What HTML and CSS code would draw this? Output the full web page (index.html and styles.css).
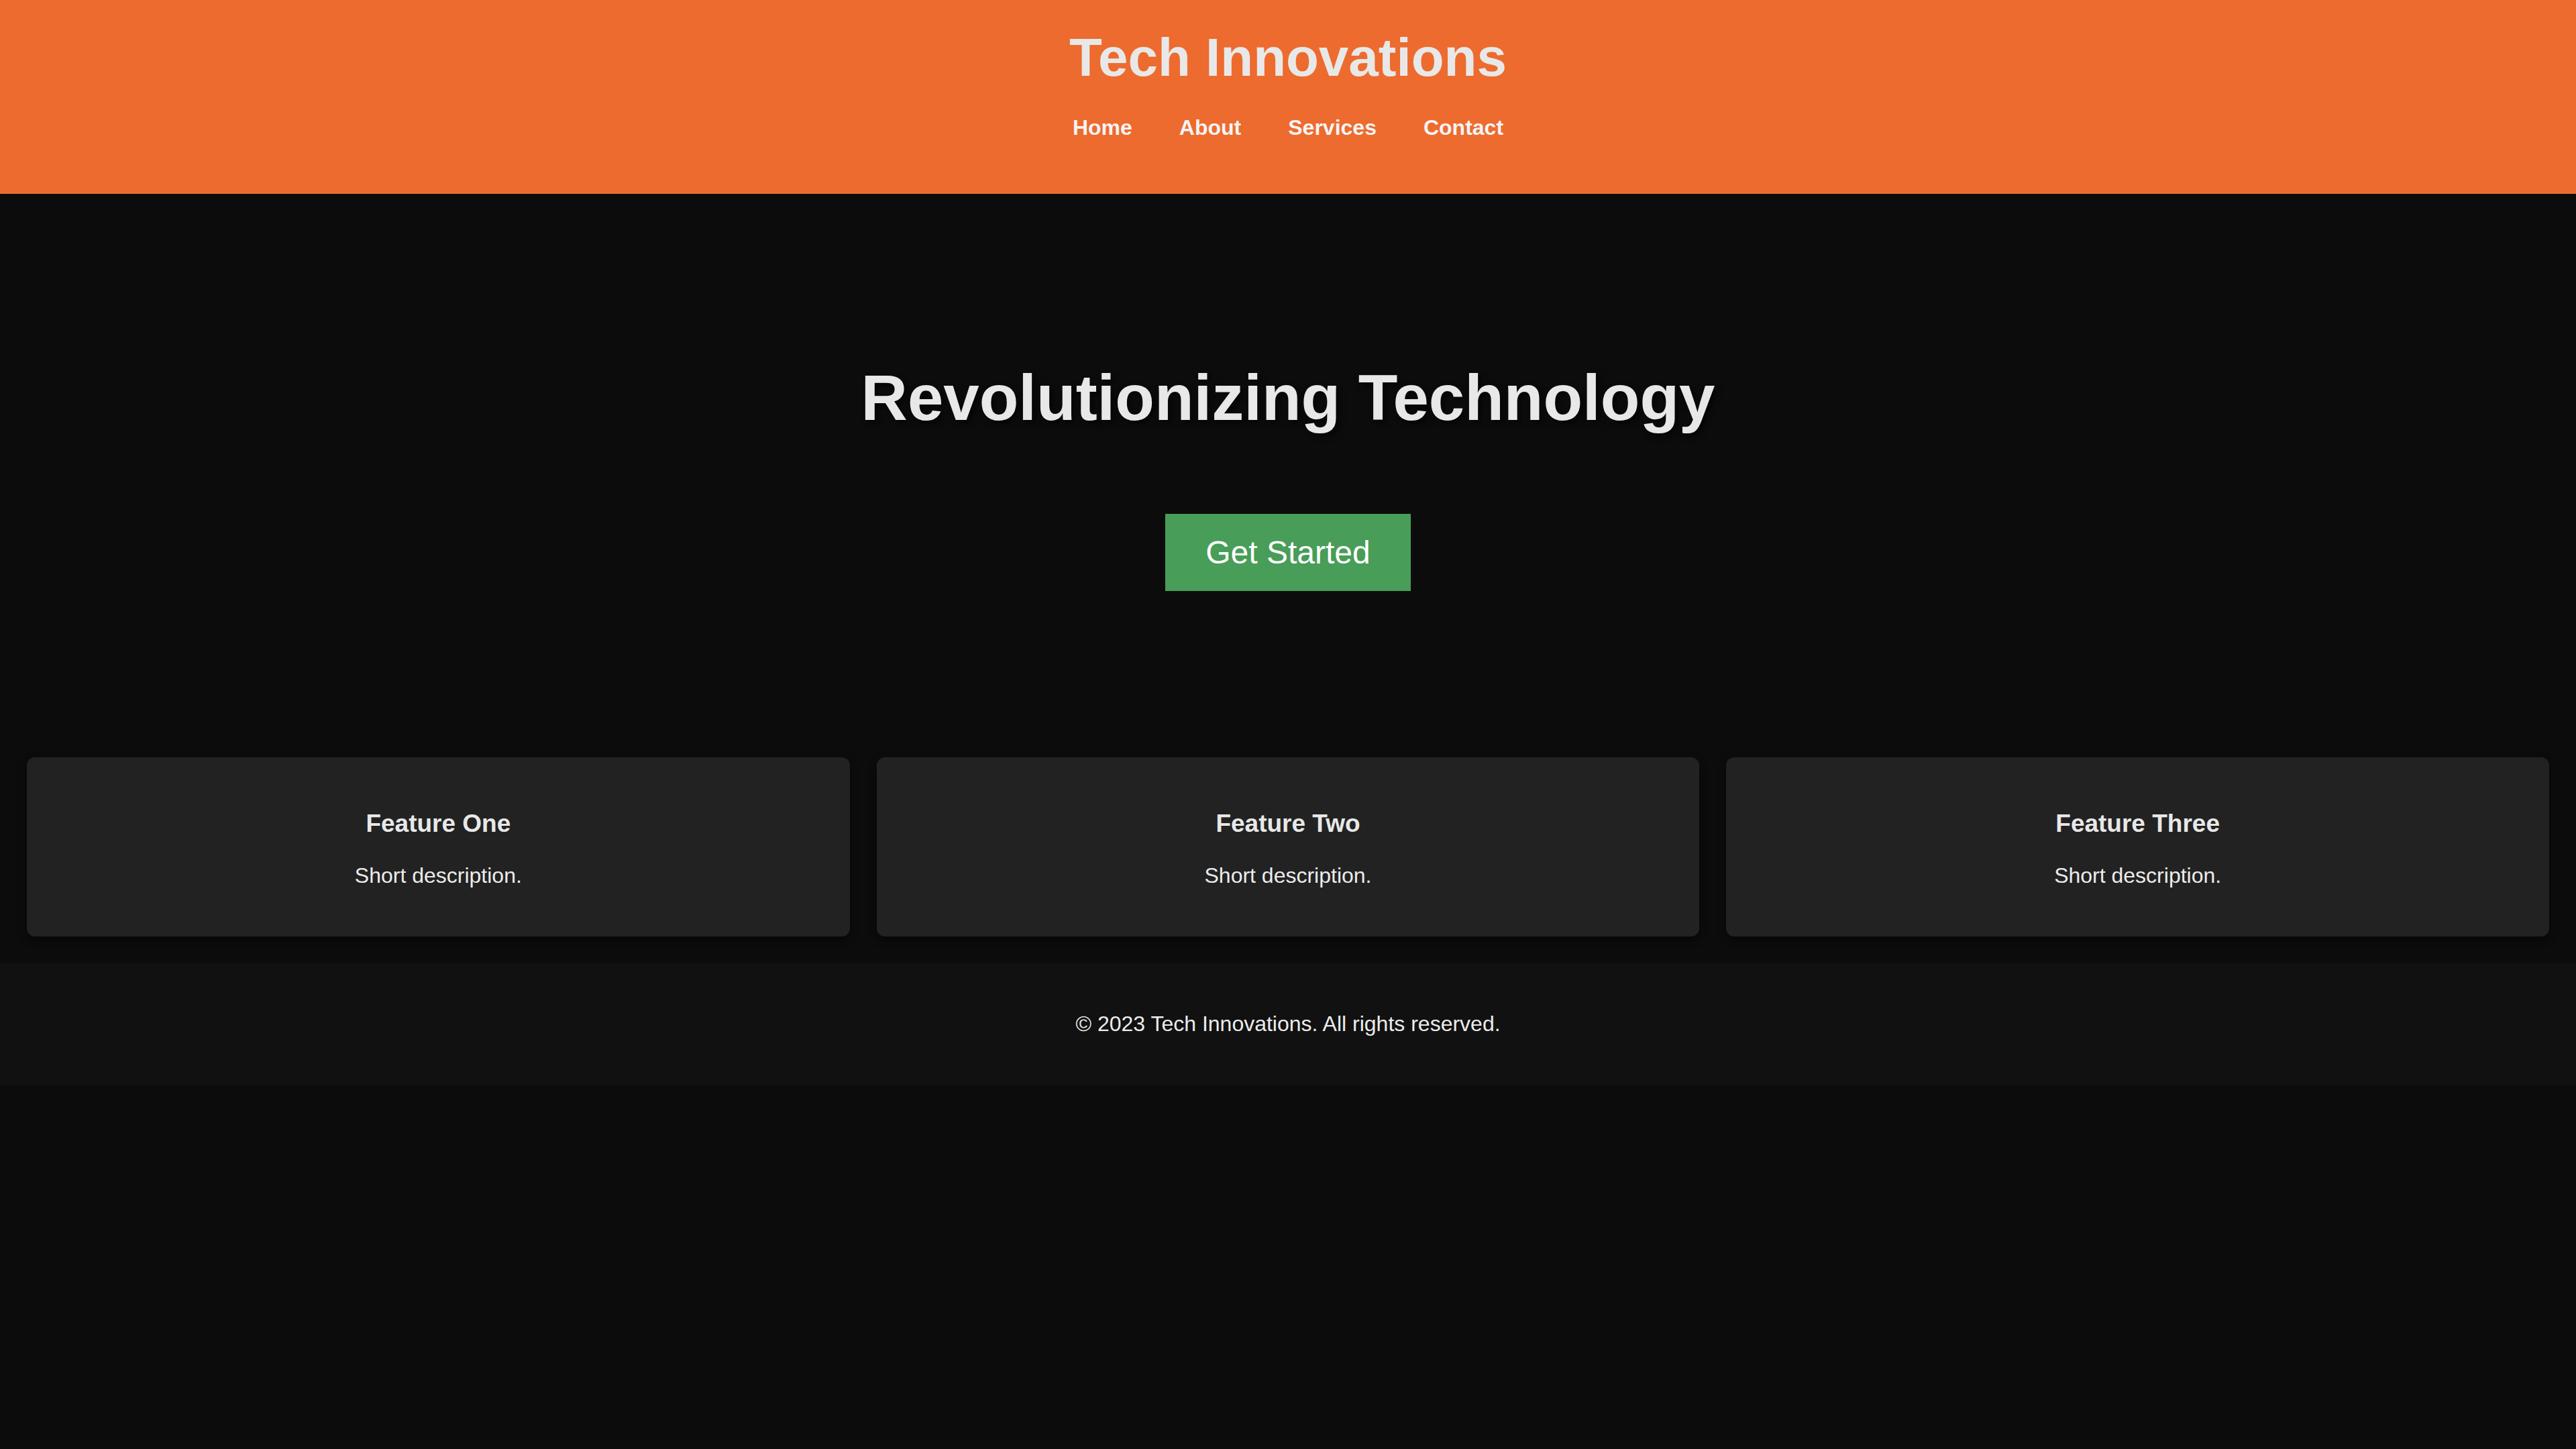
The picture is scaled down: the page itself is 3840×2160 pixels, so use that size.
FILE: index.html
```html
<!DOCTYPE html>
<html lang="en">
<head>
<meta charset="utf-8">
<title>Tech Innovations</title>
<link rel="stylesheet" href="styles.css">
</head>
<body>
<header class="site-header">
  <h1 class="site-title">Tech Innovations</h1>
  <nav class="nav">
    <a href="#" class="nav-link">Home</a>
    <a href="#" class="nav-link">About</a>
    <a href="#" class="nav-link">Services</a>
    <a href="#" class="nav-link">Contact</a>
  </nav>
</header>
<section class="hero">
  <h2 class="hero-title">Revolutionizing Technology</h2>
  <a href="#" class="btn">Get Started</a>
</section>
<section class="features">
  <div class="card">
    <h3 class="card-title">Feature One</h3>
    <p class="card-text">Short description.</p>
  </div>
  <div class="card">
    <h3 class="card-title">Feature Two</h3>
    <p class="card-text">Short description.</p>
  </div>
  <div class="card">
    <h3 class="card-title">Feature Three</h3>
    <p class="card-text">Short description.</p>
  </div>
</section>
<footer class="site-footer">
  <p class="footer-text">&copy; 2023 Tech Innovations. All rights reserved.</p>
</footer>
</body>
</html>
```

FILE: styles.css
```css
html, body {
  margin: 0;
  padding: 0;
}

body {
  background: #0c0c0c;
  color: #e8e8e8;
  font-family: "Liberation Sans", Arial, sans-serif;
}

.site-header {
  background: #ed6b2e;
  text-align: center;
  padding: 40px 0 80px;
}

.site-title {
  margin: 0;
  font-size: 80px;
  line-height: 92px;
  font-weight: bold;
  color: #e8e8e8;
}

.nav {
  margin-top: 40px;
  display: flex;
  justify-content: center;
  gap: 70px;
}

.nav-link {
  font-size: 32px;
  line-height: 37px;
  font-weight: bold;
  color: #f4f4f4;
  text-decoration: none;
}

.hero {
  display: flex;
  flex-direction: column;
  align-items: center;
  padding: 200px 0 208px;
  text-align: center;
}

.hero-title {
  margin: 49px 0 118px;
  font-size: 96px;
  line-height: 110px;
  font-weight: bold;
  color: #e8e8e8;
  text-shadow: 5px 5px 10px rgba(0, 0, 0, 0.6);
}

.btn {
  display: block;
  background: #489d58;
  color: #ffffff;
  font-size: 48px;
  line-height: 55px;
  padding: 30px 60px;
  text-decoration: none;
}

.features {
  display: grid;
  grid-template-columns: repeat(3, 1fr);
  gap: 40px;
  padding: 40px;
}

.card {
  background: #222222;
  border-radius: 12px;
  padding: 40px;
  text-align: center;
  box-shadow: 0 5px 12px rgba(0, 0, 0, 0.5);
}

.card-title {
  margin: 37px 0 38px;
  font-size: 37px;
  line-height: 43px;
  font-weight: bold;
  color: #e8e8e8;
}

.card-text {
  margin: 0 0 32px;
  font-size: 32px;
  line-height: 37px;
  color: #ececec;
}

.site-footer {
  background: #111111;
  text-align: center;
  padding: 72px 0;
}

.footer-text {
  margin: 0;
  font-size: 32px;
  line-height: 37px;
  color: #ececec;
}
```
